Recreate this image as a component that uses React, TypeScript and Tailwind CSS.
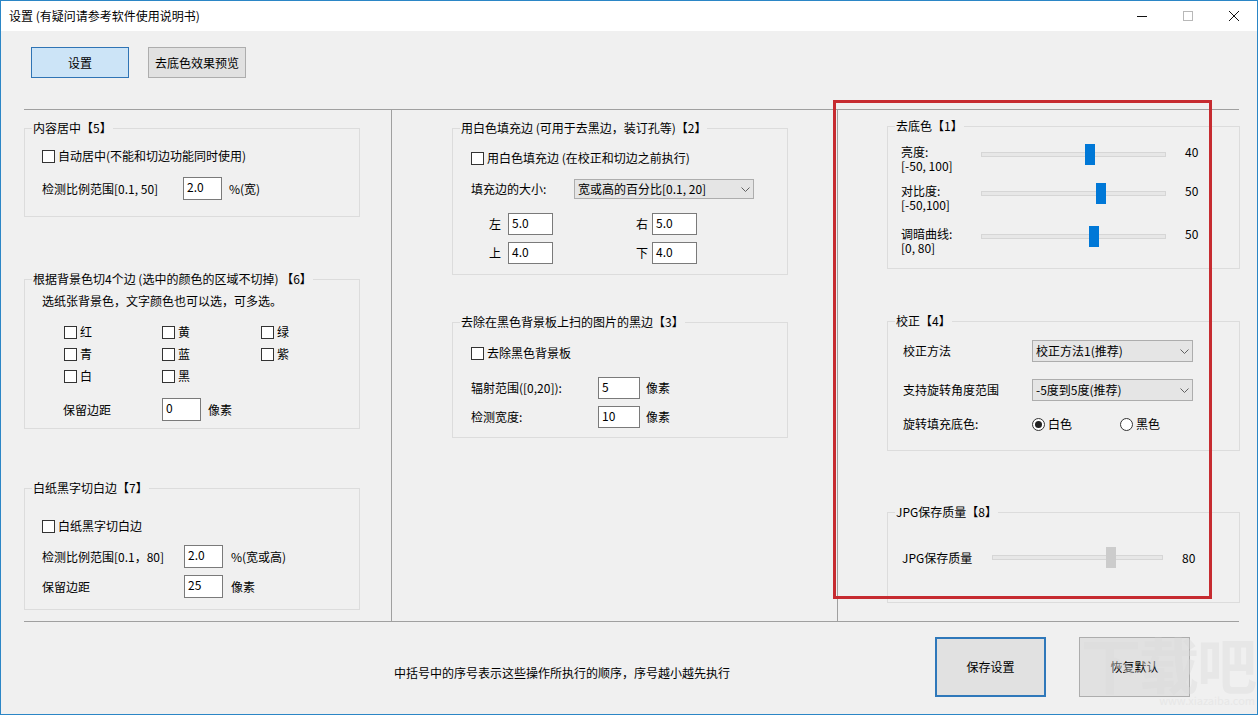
import clsx from "clsx"
import type { ReactNode } from "react"

const Box = () => <span className="h-[13px] w-[13px] shrink-0 border border-[#333] bg-white" />

const Check = ({ label, className }: { label: string; className?: string }) => (
    <div className={clsx("flex h-[20px] items-center gap-[3px]", className)}>
        <Box />
        <span className="whitespace-nowrap">{label}</span>
    </div>
)

const Radio = ({ label, checked }: { label: string; checked?: boolean }) => (
    <div className="flex items-center gap-[3px]">
        <span className="flex h-[13px] w-[13px] items-center justify-center rounded-full border border-[#333] bg-white">
            {checked && <span className="h-[7px] w-[7px] rounded-full bg-[#222]" />}
        </span>
        <span>{label}</span>
    </div>
)

const Input = ({ value, className }: { value: string; className?: string }) => (
    <div className={clsx("shrink-0 border border-[#7a7a7a] bg-white pl-[3px] pt-[2px] leading-[14px]", className)}>
        {value}
    </div>
)

const Select = ({ value, className }: { value: string; className?: string }) => (
    <div
        className={clsx(
            "flex shrink-0 items-center justify-between border border-[#adadad] bg-[#e5e5e5] pl-[3px] pr-[3px]",
            className
        )}
    >
        <span className="whitespace-nowrap">{value}</span>
        <svg width="9" height="5" viewBox="0 0 9 5">
            <path d="M0.5 0.5 L4.5 4.5 L8.5 0.5" fill="none" stroke="#606060" strokeWidth="1" />
        </svg>
    </div>
)

const Slider = ({ className, thumb, gray }: { className: string; thumb: string; gray?: boolean }) => (
    <div className={clsx("relative h-[21px] shrink-0", className)}>
        <div className="absolute inset-x-0 top-[8px] h-[5px] border border-[#d6d6d6] bg-[#e7e7e7]" />
        <div className={clsx("absolute top-0 h-[21px] w-[10px]", thumb, gray ? "bg-[#cccccc]" : "bg-[#0078d7]")} />
    </div>
)

const Group = ({ title, className, children }: { title: string; className?: string; children?: ReactNode }) => (
    <div className={clsx("relative shrink-0 border border-[#dcdcdc]", className)}>
        <span className="absolute -top-[9px] left-[7px] whitespace-nowrap bg-[#f0f0f0] px-[1px] leading-[16px]">
            {title}
        </span>
        {children}
    </div>
)

const SliderRow = ({ name, range, value, thumb, className }: {
    name: string
    range: string
    value: string
    thumb: string
    className?: string
}) => (
    <div className={clsx("flex h-[28px] items-start pl-[13px]", className)}>
        <div className="w-[80px] pt-[1px] leading-[14px]">
            <div>{name}</div>
            <div>{range}</div>
        </div>
        <Slider className="w-[185px]" thumb={thumb} />
        <span className="ml-[19px] pt-[1px] leading-[14px]">{value}</span>
    </div>
)

export default function App() {
    return (
        <div className="relative h-[715px] w-[1258px] overflow-hidden border border-[#2b86c6] bg-[#f0f0f0] font-['Noto_Sans_CJK_SC',sans-serif] text-[12px] text-black">
            {/* Title bar */}
            <div className="flex h-[30px] items-center bg-white pl-[8px]">
                <span>设置 (有疑问请参考软件使用说明书)</span>
                <div className="ml-auto flex h-full">
                    <div className="flex w-[46px] items-center justify-center">
                        <svg width="10" height="10" viewBox="0 0 10 10">
                            <path d="M0 5.5 H10" stroke="#111" strokeWidth="1" />
                        </svg>
                    </div>
                    <div className="flex w-[46px] items-center justify-center">
                        <svg width="10" height="10" viewBox="0 0 10 10">
                            <rect x="0.5" y="0.5" width="9" height="9" fill="none" stroke="#b8b8b8" strokeWidth="1" />
                        </svg>
                    </div>
                    <div className="flex w-[46px] items-center justify-center">
                        <svg width="10" height="10" viewBox="0 0 10 10">
                            <path d="M0 0 L10 10 M10 0 L0 10" stroke="#111" strokeWidth="1" />
                        </svg>
                    </div>
                </div>
            </div>

            {/* Tabs */}
            <div className="flex h-[78px] items-start gap-[19px] pl-[30px] pt-[16px]">
                <div className="flex h-[31px] w-[98px] items-center justify-center border border-[#2f74b5] bg-[#cce4f7]">
                    设置
                </div>
                <div className="flex h-[31px] w-[98px] items-center justify-center border border-[#adadad] bg-[#e1e1e1]">
                    去底色效果预览
                </div>
            </div>

            {/* Main panel */}
            <div className="ml-[23px] flex h-[513px] w-[1215px] border-y border-[#a0a0a0]">
                {/* Left column */}
                <div className="flex w-[368px] shrink-0 flex-col border-r border-[#a0a0a0]">
                    <Group title="内容居中【5】" className="mt-[18px] h-[89px] w-[336px]">
                        <Check label="自动居中(不能和切边功能同时使用)" className="mt-[17px] pl-[17px]" />
                        <div className="mt-[11px] flex h-[23px] items-center pl-[17px]">
                            <span className="w-[141px]">检测比例范围[0.1, 50]</span>
                            <Input value="2.0" className="h-[23px] w-[39px]" />
                            <span className="ml-[7px]">%(宽)</span>
                        </div>
                    </Group>

                    <Group title="根据背景色切4个边 (选中的颜色的区域不切掉) 【6】" className="mt-[62px] h-[150px] w-[336px]">
                        <div className="mt-[13px] h-[16px] pl-[17px] leading-[16px]">
                            选纸张背景色，文字颜色也可以选，可多选。
                        </div>
                        <div className="mt-[12px] grid grid-cols-[98px_99px_auto] pl-[39px]">
                            {["红", "黄", "绿", "青", "蓝", "紫", "白", "黑"].map((c) => (
                                <Check key={c} label={c} className="h-[22px]" />
                            ))}
                        </div>
                        <div className="mt-[11px] flex h-[23px] items-center pl-[38px]">
                            <span className="w-[99px]">保留边距</span>
                            <Input value="0" className="h-[23px] w-[39px]" />
                            <span className="ml-[7px]">像素</span>
                        </div>
                    </Group>

                    <Group title="白纸黑字切白边【7】" className="mt-[59px] h-[122px] w-[336px]">
                        <Check label="白纸黑字切白边" className="mt-[27px] pl-[17px]" />
                        <div className="mt-[9px] flex h-[23px] items-center pl-[17px]">
                            <span className="w-[142px]">检测比例范围[0.1，80]</span>
                            <Input value="2.0" className="h-[23px] w-[39px]" />
                            <span className="ml-[8px]">%(宽或高)</span>
                        </div>
                        <div className="mt-[7px] flex h-[23px] items-center pl-[17px]">
                            <span className="w-[142px]">保留边距</span>
                            <Input value="25" className="h-[23px] w-[39px]" />
                            <span className="ml-[8px]">像素</span>
                        </div>
                    </Group>
                </div>

                {/* Middle column */}
                <div className="flex w-[446px] shrink-0 flex-col border-r border-[#a0a0a0] pl-[60px]">
                    <Group title="用白色填充边 (可用于去黑边，装订孔等)【2】" className="mt-[18px] h-[147px] w-[336px]">
                        <Check label="用白色填充边 (在校正和切边之前执行)" className="mt-[19px] pl-[18px]" />
                        <div className="mt-[11px] flex h-[20px] items-center pl-[18px]">
                            <span className="w-[103px]">填充边的大小:</span>
                            <Select value="宽或高的百分比[0.1, 20]" className="h-[20px] w-[180px]" />
                        </div>
                        <div className="mt-[14px] flex h-[22px] items-center pl-[36px]">
                            <div className="flex w-[147px] items-center">
                                <span>左</span>
                                <Input value="5.0" className="ml-[7px] h-[22px] w-[45px]" />
                            </div>
                            <span>右</span>
                            <Input value="5.0" className="ml-[4px] h-[22px] w-[45px]" />
                        </div>
                        <div className="mt-[7px] flex h-[22px] items-center pl-[36px]">
                            <div className="flex w-[147px] items-center">
                                <span>上</span>
                                <Input value="4.0" className="ml-[7px] h-[22px] w-[45px]" />
                            </div>
                            <span>下</span>
                            <Input value="4.0" className="ml-[4px] h-[22px] w-[45px]" />
                        </div>
                    </Group>

                    <Group title="去除在黑色背景板上扫的图片的黑边【3】" className="mt-[47px] h-[116px] w-[336px]">
                        <Check label="去除黑色背景板" className="mt-[20px] pl-[18px]" />
                        <div className="mt-[14px] flex h-[22px] items-center pl-[18px]">
                            <span className="w-[127px]">辐射范围([0,20]):</span>
                            <Input value="5" className="h-[22px] w-[42px]" />
                            <span className="ml-[6px]">像素</span>
                        </div>
                        <div className="mt-[7px] flex h-[22px] items-center pl-[18px]">
                            <span className="w-[127px]">检测宽度:</span>
                            <Input value="10" className="h-[22px] w-[42px]" />
                            <span className="ml-[6px]">像素</span>
                        </div>
                    </Group>
                </div>

                {/* Right column */}
                <div className="flex w-[401px] shrink-0 flex-col pl-[49px]">
                    <Group title="去底色【1】" className="mt-[16px] h-[143px] w-[353px]">
                        <SliderRow name="亮度:" range="[-50, 100]" value="40" thumb="left-[104px]" className="mt-[17px]" />
                        <SliderRow name="对比度:" range="[-50,100]" value="50" thumb="left-[115px]" className="mt-[11px]" />
                        <SliderRow name="调暗曲线:" range="[0, 80]" value="50" thumb="left-[108px]" className="mt-[15px]" />
                    </Group>

                    <Group title="校正【4】" className="mt-[52px] h-[130px] w-[353px]">
                        <div className="mt-[18px] flex h-[22px] items-center pl-[15px]">
                            <span className="w-[129px]">校正方法</span>
                            <Select value="校正方法1(推荐)" className="h-[22px] w-[161px]" />
                        </div>
                        <div className="mt-[17px] flex h-[22px] items-center pl-[15px]">
                            <span className="w-[129px]">支持旋转角度范围</span>
                            <Select value="-5度到5度(推荐)" className="h-[22px] w-[161px]" />
                        </div>
                        <div className="mt-[13px] flex h-[20px] items-center pl-[15px]">
                            <span className="w-[129px]">旋转填充底色:</span>
                            <div className="w-[88px]">
                                <Radio label="白色" checked />
                            </div>
                            <Radio label="黑色" />
                        </div>
                    </Group>

                    <Group title="JPG保存质量【8】" className="mt-[61px] h-[91px] w-[353px]">
                        <div className="mt-[34px] flex h-[21px] items-center pl-[14px]">
                            <span className="w-[90px]">JPG保存质量</span>
                            <Slider className="w-[171px]" thumb="left-[114px]" gray />
                            <span className="ml-[19px]">80</span>
                        </div>
                    </Group>
                </div>
            </div>

            {/* Footer */}
            <div className="flex h-[92px] items-start pl-[393px] pt-[15px]">
                <span className="mt-[28px] w-[541px] leading-[16px]">
                    中括号中的序号表示这些操作所执行的顺序，序号越小越先执行
                </span>
                <div className="flex h-[60px] w-[111px] items-center justify-center border-2 border-[#2f78ba] bg-[#e1e1e1]">
                    保存设置
                </div>
                <div className="ml-[33px] flex h-[60px] w-[111px] items-center justify-center border border-[#adadad] bg-[#e1e1e1]">
                    恢复默认
                </div>
            </div>

            {/* Red highlight annotation */}
            <div className="pointer-events-none absolute left-[832px] top-[99px] h-[499px] w-[379px] border-[3px] border-[#c62b30]" />

            {/* Site watermark, very faint */}
            <div className="pointer-events-none absolute right-[2px] top-[632px] flex flex-col items-end leading-none text-[#dadada] opacity-40">
                <span className="text-[60px] font-bold tracking-[-2px]">下载吧</span>
                <span className="mt-[2px] text-[11px]">www.xiazaiba.com</span>
            </div>
        </div>
    )
}
